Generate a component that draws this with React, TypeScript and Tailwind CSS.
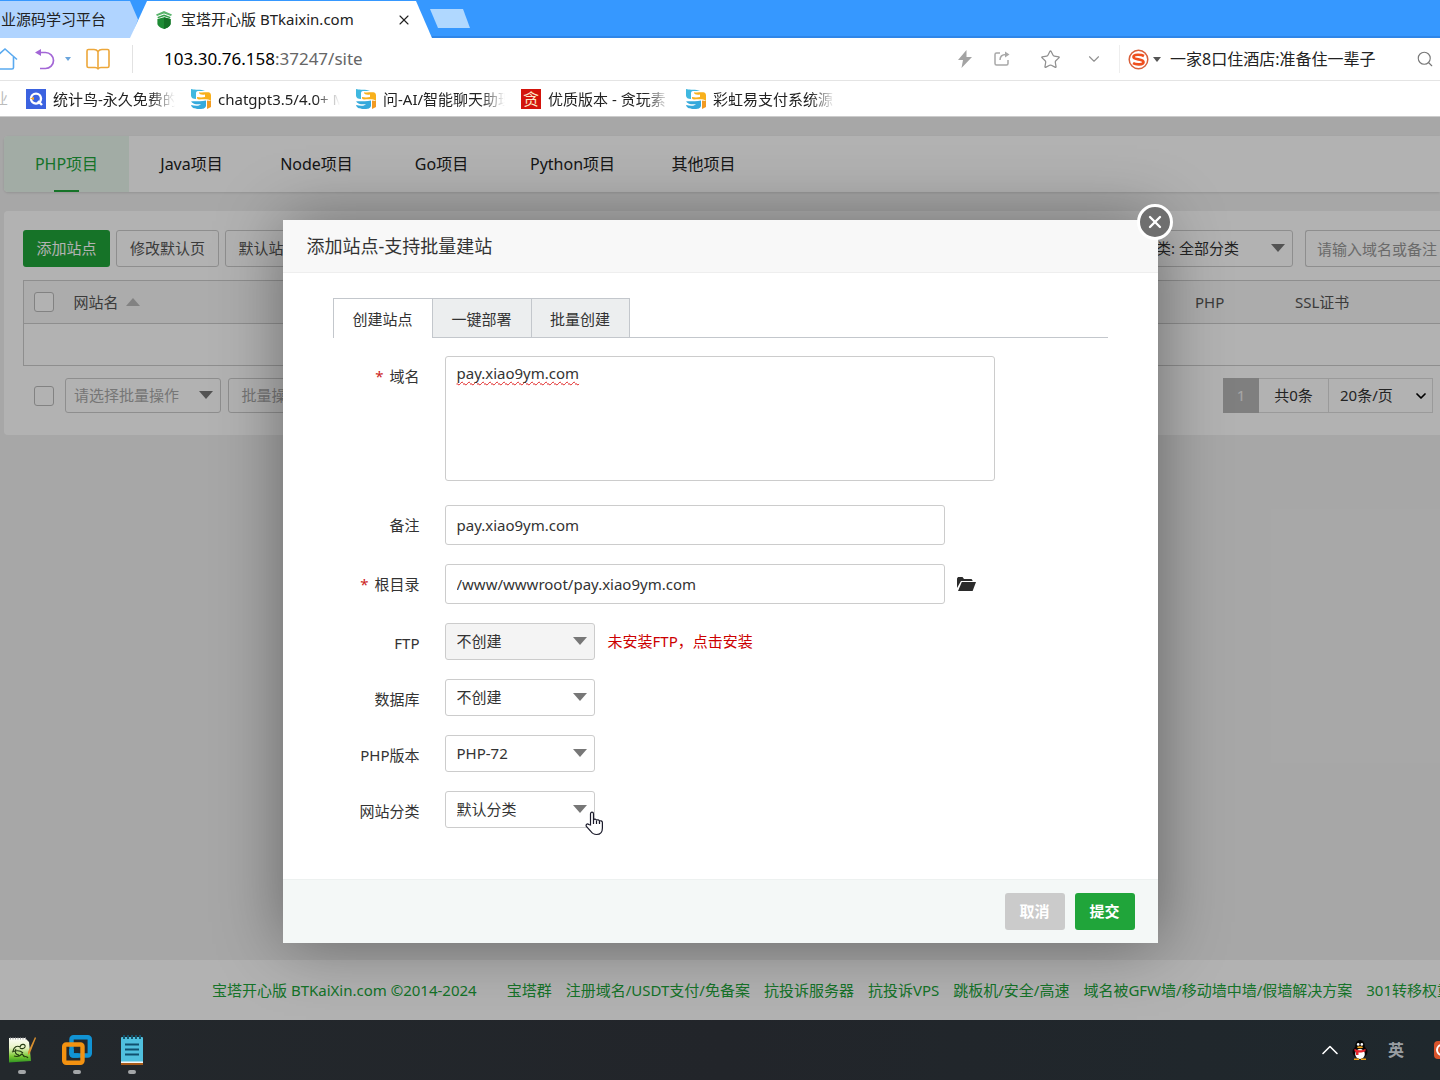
import { useState } from "react";
import type { ReactNode } from "react";
import clsx from "clsx";
import { ChevronDown, ChevronUp, Search, Star, X } from "lucide-react";

const projectTabs = [
    "PHP项目",
    "Java项目",
    "Node项目",
    "Go项目",
    "Python项目",
    "其他项目",
];

const footerLinks = [
    "宝塔群",
    "注册域名/USDT支付/免备案",
    "抗投诉服务器",
    "抗投诉VPS",
    "跳板机/安全/高速",
    "域名被GFW墙/移动墙中墙/假墙解决方案",
    "301转移权重",
];

const ShieldLogo = () => (
    <svg width="18" height="18" viewBox="0 0 18 18" aria-hidden="true">
        <path d="M9 0 17 3.4 16 5 9 2.4 2 5 1 3.4Z" fill="#5cb56e" />
        <path d="M9 3.4 15.6 6 15 7.2 9 5.2 3 7.2 2.4 6Z" fill="#36a34c" />
        <path
            d="M2.4 8 9 6.2 15.6 8v4.4c0 2.4-3 4.4-6.6 5.6-3.6-1.2-6.6-3.2-6.6-5.6Z"
            fill="#1d8b34"
        />
        <path d="M9 6.2 15.6 8v4.4c0 2.4-3 4.4-6.6 5.6Z" fill="#137226" />
    </svg>
);

const BirdIcon = () => (
    <svg width="20" height="20" viewBox="0 0 20 20" aria-hidden="true">
        <rect width="20" height="20" fill="#3b62e0" />
        <circle
            cx="10"
            cy="9.6"
            r="5"
            fill="none"
            stroke="#fff"
            strokeWidth="2.4"
        />
        <path d="m12 12 4 4" stroke="#fff" strokeWidth="2.4" />
        <path d="m4 9.5 4-1.4v3Z" fill="#f5a623" />
    </svg>
);

const RibbonIcon = () => (
    <svg width="20" height="20" viewBox="0 0 20 20" aria-hidden="true">
        <path
            d="M0 0c4 1.500 10-.5 14 2H7C5.500 2 5 3 5 4.500V10C2 10 0 9 0 6.500Z"
            fill="#3fb8e0"
        />
        <path
            d="M8 3.200c5 1 12-2 12 3V12c-3-2.500-8-1.500-12-1.500-1.500 0-2-.7-2-2V8c3 .6 6 .4 8 0V5.500C11 6 8 5.500 8 3.200Z"
            fill="#f8b01c"
        />
        <path d="M16 11.500 20 12v6l-4 2Z" fill="#f29b22" />
        <path
            d="M0 12.500c4-1 10 .5 15-1V17c-1 3-4 3-7 3-4 0-7-.5-8-4 4 1 8 1.500 10-1-3 .6-8 .5-10-2.500Z"
            fill="#35a9dc"
        />
    </svg>
);

const TanIcon = () => (
    <span className="flex size-5 items-center justify-center bg-[#d3140c] text-[16px] leading-none text-[#fde9c8]">
        贪
    </span>
);

const bookmarks: { title: string; icon: ReactNode }[] = [
    { title: "统计鸟-永久免费的", icon: <BirdIcon /> },
    { title: "chatgpt3.5/4.0+ M", icon: <RibbonIcon /> },
    { title: "问-AI/智能聊天助理", icon: <RibbonIcon /> },
    { title: "优质版本 - 贪玩素", icon: <TanIcon /> },
    { title: "彩虹易支付系统源", icon: <RibbonIcon /> },
];

const HomeIcon = () => (
    <svg width="26" height="24" viewBox="0 0 26 24" fill="none" stroke="#5aaaf0" strokeWidth="1.6" aria-hidden="true">
        <path d="M1 12.500 13 2l12 10.500" />
        <path d="M4.500 10v10.500c0 .8.500 1.500 1.500 1.500h14c1 0 1.500-.7 1.500-1.500V10" />
    </svg>
);

const UndoIcon = () => (
    <svg width="20" height="22" viewBox="0 0 20 22" aria-hidden="true">
        <path
            d="M3 4.500h7.500a8 8 0 0 1 0 16H5"
            fill="none"
            stroke="#a366d6"
            strokeWidth="1.700"
        />
        <path d="M0 4.500 6 1v7Z" fill="#a366d6" />
    </svg>
);

const BookIcon = () => (
    <svg width="24" height="22" viewBox="0 0 24 22" fill="none" stroke="#eda73a" strokeWidth="1.600" strokeLinejoin="round" aria-hidden="true">
        <path d="M12 3.500C11 2 9.500 1.500 8 1.500H2.500c-1 0-1.500.5-1.500 1.500v15c0 1 .5 1.500 1.500 1.500H9c1.500 0 2.500.5 3 1.500.5-1 1.500-1.500 3-1.500h6.500c1 0 1.500-.5 1.500-1.500V3c0-1-.5-1.500-1.500-1.500H16c-1.500 0-3 .5-4 2Z" />
        <path d="M12 3.500V21" />
    </svg>
);

const BoltIcon = () => (
    <svg width="14" height="18" viewBox="0 0 14 18" aria-hidden="true">
        <path d="M8.500 0 0 10h5L3.500 18 14 7H8.500Z" fill="#a3a3a3" />
    </svg>
);

const ShareIcon = () => (
    <svg width="16" height="16" viewBox="0 0 16 16" fill="none" stroke="#a8a8a8" strokeWidth="1.500" aria-hidden="true">
        <path d="M6 2H2.500C1.500 2 1 2.500 1 3.500v9c0 1 .5 1.500 1.500 1.500h10c1 0 1.500-.5 1.500-1.500V9" />
        <path d="M6 9c0-3.500 2-5.500 6-5.500" />
        <path d="M11 .5 15.500 3.500 11 6.500Z" fill="#a8a8a8" stroke="none" />
    </svg>
);

const SogouIcon = () => (
    <svg width="21" height="21" viewBox="0 0 21 21" aria-hidden="true">
        <circle
            cx="10.500"
            cy="10.500"
            r="9.300"
            fill="none"
            stroke="#d9603b"
            strokeWidth="1.500"
        />
        <path
            d="M16 7C13 5.400 5.500 5 5.500 8c0 3 10 1.800 10 5 0 3.200-7.600 2.900-10.500 1.200"
            fill="none"
            stroke="#f04f1d"
            strokeWidth="2.700"
        />
    </svg>
);

const FolderIcon = () => (
    <svg width="19" height="14" viewBox="0 0 19 14" fill="#2b2b2b" aria-hidden="true">
        <path d="M0 11V1.500L1 0h4.500l1.500 2h7.500l1 1.200V4H4Z" />
        <path d="M4.800 5H19l-3.400 9H1Z" />
    </svg>
);

const HandCursor = () => (
    <svg width="19" height="25" viewBox="0 0 19 25" aria-hidden="true">
        <path
            d="M5.500 14V3C5.500.500 8.500.500 8.500 3v6c.5-1.500 3-1.200 3 .5.500-1.200 3-.9 3 .8.600-1 2.900-.6 2.900 1.200v5.500c0 4-2 6.500-5.800 6.500-3 0-4.500-1-5.800-3.200L1.400 15.500c-1-1.900 1-3.200 2.300-2Z"
            fill="#fff"
            stroke="#1a1a2a"
            strokeWidth="1.200"
        />
        <path
            d="M8.500 9v4M11.500 9.800V13M14.500 10.500V13"
            stroke="#1a1a2a"
            strokeWidth="1.200"
        />
    </svg>
);

const NotepadPlusIcon = () => (
    <svg width="28" height="28" viewBox="0 0 28 28" aria-hidden="true">
        <defs>
            <linearGradient id="npp" x1="0" y1="0" x2="0" y2="1">
                <stop offset="0" stopColor="#fdfdfa" />
                <stop offset=".4" stopColor="#e8f3c4" />
                <stop offset=".75" stopColor="#79c832" />
                <stop offset="1" stopColor="#2f9422" />
            </linearGradient>
        </defs>
        <path d="M1 2h16l4 4 2 19-22 1.500Z" fill="url(#npp)" />
        <path
            d="M2 2.500h16"
            stroke="#a5a5a5"
            strokeWidth="2"
            strokeDasharray="1 1.500"
        />
        <path
            d="M5 15c1-4 4-6 7-4 1-4 6-3 5 0-1 2-4 2-5 1M4 16c5-2 9-1 11 1M6 20c3 1 6 0 8-2l3 3M8 13c-2 3 0 6 3 6M15 20c2 1 4 0 5 2"
            fill="none"
            stroke="#243b12"
            strokeWidth="1.100"
        />
        <path d="m27 1 1 1-6 15-2 2v-3Z" fill="#d9902f" />
    </svg>
);

const VmwareIcon = () => (
    <svg width="30" height="30" viewBox="0 0 30 30" fill="none" strokeWidth="4.400" aria-hidden="true">
        <rect x="9.500" y="2.200" width="18.300" height="18.300" rx="2" stroke="#1193d4" />
        <rect x="2.200" y="9.500" width="18.300" height="18.300" rx="2" stroke="#f39211" />
        <path d="M9.500 14v4.500c0 1.300.7 2 2 2h5" stroke="#1193d4" />
    </svg>
);

const NotepadIcon = () => (
    <svg width="22" height="30" viewBox="0 0 22 30" aria-hidden="true">
        <rect y="2" width="22" height="26" rx="1" fill="#50c0de" />
        <rect y="26.500" width="22" height="1.500" fill="#f2f6f7" />
        <rect y="28" width="22" height="2" fill="#a85a18" />
        <path
            d="M4 9.500h14M4 14.500h14M4 19.500h14"
            stroke="#10506e"
            strokeWidth="2"
        />
        <path
            d="M3 0v4M7 0v4M11 0v4M15 0v4M19 0v4"
            stroke="#15536b"
            strokeWidth="2"
        />
    </svg>
);

const PenguinIcon = () => (
    <svg width="16" height="20" viewBox="0 0 16 20" aria-hidden="true">
        <ellipse cx="8" cy="12" rx="7.500" ry="6.500" fill="#050505" />
        <ellipse cx="8" cy="6" rx="4.800" ry="6" fill="#050505" />
        <ellipse cx="8" cy="14" rx="4.800" ry="5" fill="#fff" />
        <circle cx="6.200" cy="4.400" r="1.300" fill="#fff" />
        <circle cx="9.800" cy="4.400" r="1.300" fill="#fff" />
        <ellipse cx="8" cy="7.200" rx="3" ry="1" fill="#f0a017" />
        <path d="M2.500 8.800c3.500 2 7.500 2 11 0v2.400c-2.500 1.200-5 1.500-7 1.300V15H4v-3l-1.500-.8Z" fill="#e4232b" />
        <path d="M2 19.200h5M9 19.200h5" stroke="#f0a017" strokeWidth="1.500" />
    </svg>
);

const Triangle = ({ up = false }: { up?: boolean }) => (
    <svg
        width="14"
        height="8"
        viewBox="0 0 14 8"
        className={clsx(up && "rotate-180")}
        fill="currentColor"
        aria-hidden="true"
    >
        <path d="M0 0h14L7 8Z" />
    </svg>
);

type SelectBoxProps = {
    id: string;
    value: string;
    className: string;
    label?: string;
};

const SelectBox = ({ id, value, className, label }: SelectBoxProps) => (
    <div className="relative">
        <select
            id={id}
            aria-label={label}
            className={clsx(
                "appearance-none rounded-[3px] border border-[#ccc] pr-8",
                className
            )}
        >
            <option>{value}</option>
        </select>
        <span className="pointer-events-none absolute inset-y-0 right-2 flex items-center pb-px text-[#777]">
            <Triangle />
        </span>
    </div>
);

const BrowserChrome = () => (
    <header>
        <div className="flex h-[38px] items-end overflow-hidden bg-[#3698ff] shadow-[inset_0_-2px_#2f86e8]">
            <button
                type="button"
                className="flex h-[37px] w-[138px] shrink-0 items-center bg-[#b0d4ff] text-[15px] text-[#222] [clip-path:polygon(0_0,130px_0,100%_50%,131px_100%,0_100%)]"
            >
                <span className="flex w-[106px] justify-end overflow-hidden whitespace-nowrap">
                    业源码学习平台
                </span>
            </button>
            <div className="-ml-2 flex h-[37px] w-[302px] shrink-0 items-center bg-white pl-[25px] text-[15px] text-[#222] [clip-path:polygon(17px_0,286px_0,100%_100%,0_100%)]">
                <ShieldLogo />
                <span className="ml-2 flex-1 whitespace-nowrap">
                    宝塔开心版 BTkaixin.com
                </span>
                <button type="button" aria-label="关闭标签页" className="mr-5">
                    <X size={16} strokeWidth={1.7} />
                </button>
            </div>
            <button
                type="button"
                aria-label="新建标签页"
                className="-ml-[2px] mb-[10px] h-[19px] w-10 bg-[#b0d8ff] [clip-path:polygon(0_0,33px_0,100%_100%,8px_100%)]"
            />
        </div>

        <div className="flex h-[43px] items-center border-b border-[#e4e4e4] bg-white">
            <button type="button" aria-label="主页" className="-ml-2 shrink-0">
                <HomeIcon />
            </button>
            <button type="button" aria-label="后退" className="ml-[17px]">
                <UndoIcon />
            </button>
            <button
                type="button"
                aria-label="历史记录"
                className="ml-[10px] mr-[15px] border-x-[3px] border-t-4 border-x-transparent border-t-[#6aa5dc]"
            />
            <button type="button" aria-label="阅读">
                <BookIcon />
            </button>
            <div className="ml-[22px] mr-[31px] h-7 w-px bg-[#e2e2e2]" />
            <p className="flex-1 text-[17px] text-[#666]">
                <span className="text-black">103.30.76.158</span>
                :37247/site
            </p>
            <div className="flex items-center">
                <button type="button" aria-label="加速">
                    <BoltIcon />
                </button>
                <button type="button" aria-label="分享" className="ml-[22px]">
                    <ShareIcon />
                </button>
                <button
                    type="button"
                    aria-label="收藏"
                    className="ml-[30px] text-[#909090]"
                >
                    <Star size={21} strokeWidth={1.4} />
                </button>
                <button
                    type="button"
                    aria-label="更多"
                    className="ml-6 text-[#909090]"
                >
                    <ChevronDown size={18} strokeWidth={1.5} />
                </button>
            </div>
            <div className="ml-4 mr-2 h-7 w-px bg-[#eee]" />
            <SogouIcon />
            <span className="ml-1 mr-[9px] border-x-4 border-t-[5px] border-x-transparent border-t-[#555]" />
            <p className="w-[246px] text-[16px] whitespace-nowrap text-[#222]">
                一家8口住酒店:准备住一辈子
            </p>
            <button
                type="button"
                aria-label="搜索"
                className="mr-[6px] text-[#777]"
            >
                <Search size={18} strokeWidth={1.5} />
            </button>
        </div>

        <nav className="flex h-9 items-center overflow-hidden border-b border-[#ccc] bg-white text-[15px] text-[#222]">
            <span className="flex w-[26px] shrink-0">
                <span className="flex w-2 justify-end overflow-hidden text-[#bbb]">
                    业
                </span>
            </span>
            {bookmarks.map(({ title, icon }) => (
                <a
                    key={title}
                    href="#"
                    className="flex w-[165px] shrink-0 items-center"
                >
                    <span className="shrink-0">{icon}</span>
                    <span className="ml-[7px] w-[122px] overflow-hidden pt-px whitespace-nowrap [mask-image:linear-gradient(to_right,#000_80%,transparent)]">
                        {title}
                    </span>
                </a>
            ))}
        </nav>
    </header>
);

const SitePage = () => (
    <div className="flex flex-1 flex-col bg-[#f0f0f0] text-[15px] text-[#555]">
        <nav className="mt-[19px] ml-1 flex h-14 rounded-l bg-white text-[16px] text-[#222] shadow-sm">
            {projectTabs.map((tab, index) => (
                <button
                    key={tab}
                    type="button"
                    className={clsx(
                        "flex min-w-[125px] flex-col items-center px-[26px]",
                        index === 0 && "rounded-l bg-[#e9f6ec] text-[#20a53a]"
                    )}
                >
                    <span className="flex flex-1 items-center">{tab}</span>
                    {index === 0 && (
                        <span className="-mt-[2px] h-[2px] w-[25px] bg-[#20a53a]" />
                    )}
                </button>
            ))}
        </nav>

        <main className="mt-[19px] ml-1 rounded-l bg-white pt-[19px] pb-[22px] pl-[19px]">
            <div className="flex items-center">
                <button
                    type="button"
                    className="h-[37px] w-[87px] rounded-[3px] bg-[#20a53a] text-white"
                >
                    添加站点
                </button>
                <button
                    type="button"
                    className="ml-[6px] h-[37px] w-[103px] rounded-[3px] border border-[#ccc]"
                >
                    修改默认页
                </button>
                <button
                    type="button"
                    className="ml-[6px] h-[37px] w-[87px] rounded-[3px] border border-[#ccc]"
                >
                    默认站点
                </button>
                <div className="ml-auto flex gap-3">
                    <SelectBox
                        id="category"
                        label="分类"
                        value="分类: 全部分类"
                        className="h-[37px] w-[175px] bg-white pl-[22px] text-[#333]"
                    />
                    <input
                        type="text"
                        aria-label="搜索站点"
                        placeholder="请输入域名或备注"
                        className="h-[37px] w-[135px] rounded-l-[3px] border border-r-0 border-[#ccc] pl-[11px] placeholder:text-[#999]"
                    />
                </div>
            </div>

            <table className="mt-[13px] w-full table-fixed border-collapse border border-r-0 border-[#ccc] text-left">
                <thead>
                    <tr className="h-[43px] border-b border-[#ccc] bg-[#f6f6f6]">
                        <th className="w-[50px] pl-[10px]">
                            <input
                                type="checkbox"
                                aria-label="全选"
                                className="block size-5 appearance-none rounded-[3px] border border-[#bbb] bg-white"
                            />
                        </th>
                        <th className="font-normal">
                            <span className="flex items-center gap-[7px]">
                                网站名
                                <span className="text-[#bbb]">
                                    <Triangle up />
                                </span>
                            </span>
                        </th>
                        <th className="w-[100px] font-normal">PHP</th>
                        <th className="w-[145px] font-normal">SSL证书</th>
                    </tr>
                </thead>
                <tbody>
                    <tr className="h-[42px]">
                        <td colSpan={4} />
                    </tr>
                </tbody>
            </table>

            <div className="mt-3 flex items-center pr-[7px] pl-[11px]">
                <input
                    type="checkbox"
                    aria-label="选择全部站点"
                    className="size-5 appearance-none rounded-[3px] border border-[#bbb] bg-white"
                />
                <div className="ml-[11px]">
                    <SelectBox
                        id="batch"
                        label="批量操作"
                        value="请选择批量操作"
                        className="h-[35px] w-[156px] bg-white pl-2 text-[#aaa]"
                    />
                </div>
                <button
                    type="button"
                    className="ml-[7px] h-[35px] w-[87px] rounded-[3px] border border-[#ccc] text-[#aaa]"
                >
                    批量操作
                </button>
                <div className="ml-auto flex h-[35px] items-center border border-[#ddd] text-[#333]">
                    <span className="-my-px -ml-px flex h-[35px] w-9 items-center justify-center bg-[#b7b7b7] text-[#eee]">
                        1
                    </span>
                    <span className="w-[69px] text-center">共0条</span>
                    <div className="relative flex h-full items-center border-l border-[#ddd]">
                        <select
                            aria-label="每页条数"
                            className="h-full w-[103px] appearance-none bg-transparent pl-[11px]"
                        >
                            <option>20条/页</option>
                        </select>
                        <ChevronDown
                            size={16}
                            strokeWidth={2.6}
                            className="pointer-events-none absolute right-[3px] text-black"
                        />
                    </div>
                </div>
            </div>
        </main>

        <footer className="mt-auto flex h-[60px] items-center overflow-hidden bg-white pl-[212px] whitespace-nowrap text-[#20a53a]">
            <a href="#" className="mr-[30px]">
                宝塔开心版 BTKaiXin.com ©2014-2024
            </a>
            <div className="flex gap-[14px]">
                {footerLinks.map((link) => (
                    <a key={link} href="#">
                        {link}
                    </a>
                ))}
            </div>
        </footer>
    </div>
);

type FieldProps = {
    id: string;
    label: string;
    required?: boolean;
    children: ReactNode;
};

const Field = ({ id, label, required, children }: FieldProps) => (
    <div className="flex items-start">
        <label
            htmlFor={id}
            className="mr-[25px] h-9 w-[87px] shrink-0 text-right leading-10"
        >
            {required && <span className="mr-[6px] text-[#c22]">*</span>}
            {label}
        </label>
        {children}
    </div>
);

const AddSiteDialog = () => {
    const [domain, setDomain] = useState("pay.xiao9ym.com");
    const [remark, setRemark] = useState("pay.xiao9ym.com");
    const [root, setRoot] = useState("/www/wwwroot/pay.xiao9ym.com");

    return (
        <div
            role="dialog"
            aria-labelledby="dialog-title"
            className="relative h-fit w-[875px] bg-white text-[15px] text-[#333] shadow-[1px_1px_63px_rgba(0,0,0,0.4)]"
        >
            <h2
                id="dialog-title"
                className="flex h-[53px] items-center border-b border-[#eee] bg-[#f8f8f8] pl-6 text-[18px]"
            >
                添加站点-支持批量建站
            </h2>
            <button
                type="button"
                aria-label="关闭"
                className="absolute -top-4 -right-[15px] flex size-9 items-center justify-center rounded-full border-[3px] border-white bg-[#6f6f6f] text-white"
            >
                <X size={20} strokeWidth={2.8} />
            </button>

            <div className="px-[50px] pt-[25px] pb-[51px]">
                <div className="flex border-b border-[#c3c7cc]">
                    {["创建站点", "一键部署", "批量创建"].map((tab, index) => (
                        <button
                            key={tab}
                            type="button"
                            className={clsx(
                                "-mb-px h-10 w-[99px] border-t border-l border-[#c3c7cc] pt-[2px]",
                                index === 0
                                    ? "bg-white"
                                    : "border-b bg-[#eceeef]",
                                index === 2 && "border-r"
                            )}
                        >
                            {tab}
                        </button>
                    ))}
                </div>

                <form className="mt-[18px] flex flex-col gap-[19px]">
                    <Field id="domain" label="域名" required>
                        <textarea
                            id="domain"
                            value={domain}
                            onChange={(e) => setDomain(e.target.value)}
                            className="mb-[5px] h-[125px] w-[550px] resize-none rounded-[3px] border border-[#ccc] px-[11px] py-[5px] leading-[22px] underline decoration-[#e02020] decoration-wavy decoration-1 underline-offset-2 [text-decoration-skip-ink:none]"
                        />
                    </Field>
                    <Field id="remark" label="备注">
                        <input
                            id="remark"
                            type="text"
                            value={remark}
                            onChange={(e) => setRemark(e.target.value)}
                            className="h-10 w-[500px] rounded-[3px] border border-[#ccc] px-[11px]"
                        />
                    </Field>
                    <Field id="root" label="根目录" required>
                        <input
                            id="root"
                            type="text"
                            value={root}
                            onChange={(e) => setRoot(e.target.value)}
                            className="h-10 w-[500px] rounded-[3px] border border-[#ccc] px-[11px]"
                        />
                        <button
                            type="button"
                            aria-label="选择目录"
                            className="ml-3 flex h-10 items-center"
                        >
                            <FolderIcon />
                        </button>
                    </Field>
                    <Field id="ftp" label="FTP">
                        <SelectBox
                            id="ftp"
                            value="不创建"
                            className="h-[37px] w-[150px] bg-[#f4f4f4] pl-[11px]"
                        />
                        <a href="#" className="ml-[13px] leading-9 text-[#c00]">
                            未安装FTP，点击安装
                        </a>
                    </Field>
                    <Field id="database" label="数据库">
                        <SelectBox
                            id="database"
                            value="不创建"
                            className="h-[37px] w-[150px] bg-white pl-[11px]"
                        />
                    </Field>
                    <Field id="php" label="PHP版本">
                        <SelectBox
                            id="php"
                            value="PHP-72"
                            className="h-[37px] w-[150px] bg-white pl-[11px]"
                        />
                    </Field>
                    <Field id="type" label="网站分类">
                        <div className="relative">
                            <SelectBox
                                id="type"
                                value="默认分类"
                                className="h-[37px] w-[150px] bg-white pl-[11px]"
                            />
                            <span className="pointer-events-none absolute top-5 -right-[9px]">
                                <HandCursor />
                            </span>
                        </div>
                    </Field>
                </form>
            </div>

            <div className="flex h-16 items-center justify-end gap-[10px] border-t border-[#edf1f0] bg-[#f4f8f7] pr-[23px] font-bold text-white">
                <button
                    type="button"
                    className="h-[37px] w-[60px] rounded-[3px] bg-[#cbcbcb]"
                >
                    取消
                </button>
                <button
                    type="submit"
                    className="h-[37px] w-[60px] rounded-[3px] bg-[#20a53a]"
                >
                    提交
                </button>
            </div>
        </div>
    );
};

const Taskbar = () => (
    <footer className="flex h-[60px] items-center justify-between overflow-hidden bg-linear-to-r from-[#23282c] via-[#22252a] to-[#1f282d]">
        <div className="flex pt-2">
            {[
                { name: "Notepad++", icon: <NotepadPlusIcon /> },
                { name: "VMware", icon: <VmwareIcon /> },
                { name: "记事本", icon: <NotepadIcon /> },
            ].map(({ name, icon }, index) => (
                <button
                    key={name}
                    type="button"
                    aria-label={name}
                    className={clsx(
                        "flex w-[55px] flex-col items-center gap-[5px]",
                        index === 0 && "-ml-[6px]"
                    )}
                >
                    <span className="flex h-[30px] items-center">{icon}</span>
                    <span className="h-1 w-2 rounded-full bg-[#a3a6a8]" />
                </button>
            ))}
        </div>
        <div className="flex items-center text-white">
            <button type="button" aria-label="显示隐藏的图标">
                <ChevronUp size={28} strokeWidth={1.4} />
            </button>
            <span className="ml-2">
                <PenguinIcon />
            </span>
            <span className="ml-5 text-[16px] font-bold text-[#999ea2]">英</span>
            <span className="ml-[30px] flex h-[18px] w-[6px] items-center overflow-hidden rounded-l bg-[#d9542c]">
                <span className="ml-[2px] size-3 shrink-0 rounded-full border-2 border-white" />
            </span>
        </div>
    </footer>
);

const App = () => (
    <div className="flex min-h-screen flex-col font-['Noto_Sans','Noto_Sans_CJK_SC',sans-serif]">
        <BrowserChrome />
        <div className="relative flex flex-1 flex-col overflow-hidden">
            <SitePage />
            <div className="absolute inset-0 flex justify-center bg-black/30 pt-[103px]">
                <AddSiteDialog />
            </div>
        </div>
        <Taskbar />
    </div>
);

export default App;
